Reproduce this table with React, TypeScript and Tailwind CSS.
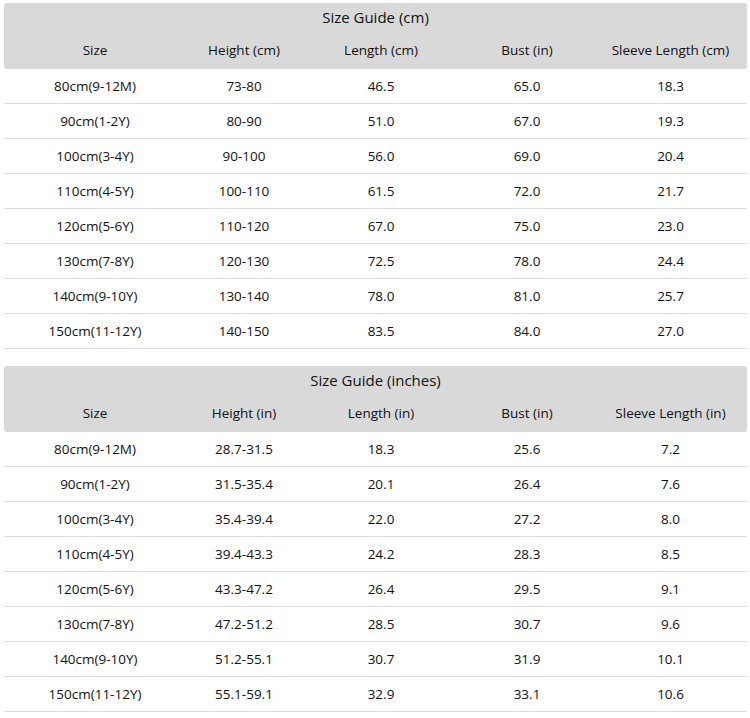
import React from "react";

type Table = {
  title: string;
  headers: string[];
  rows: string[][];
};

const sizes = [
  "80cm(9-12M)",
  "90cm(1-2Y)",
  "100cm(3-4Y)",
  "110cm(4-5Y)",
  "120cm(5-6Y)",
  "130cm(7-8Y)",
  "140cm(9-10Y)",
  "150cm(11-12Y)",
];

const cmTable: Table = {
  title: "Size Guide (cm)",
  headers: ["Size", "Height (cm)", "Length (cm)", "Bust (in)", "Sleeve Length (cm)"],
  rows: [
    ["73-80", "46.5", "65.0", "18.3"],
    ["80-90", "51.0", "67.0", "19.3"],
    ["90-100", "56.0", "69.0", "20.4"],
    ["100-110", "61.5", "72.0", "21.7"],
    ["110-120", "67.0", "75.0", "23.0"],
    ["120-130", "72.5", "78.0", "24.4"],
    ["130-140", "78.0", "81.0", "25.7"],
    ["140-150", "83.5", "84.0", "27.0"],
  ].map((r, i) => [sizes[i], ...r]),
};

const inTable: Table = {
  title: "Size Guide (inches)",
  headers: ["Size", "Height (in)", "Length (in)", "Bust (in)", "Sleeve Length (in)"],
  rows: [
    ["28.7-31.5", "18.3", "25.6", "7.2"],
    ["31.5-35.4", "20.1", "26.4", "7.6"],
    ["35.4-39.4", "22.0", "27.2", "8.0"],
    ["39.4-43.3", "24.2", "28.3", "8.5"],
    ["43.3-47.2", "26.4", "29.5", "9.1"],
    ["47.2-51.2", "28.5", "30.7", "9.6"],
    ["51.2-55.1", "30.7", "31.9", "10.1"],
    ["55.1-59.1", "32.9", "33.1", "10.6"],
  ].map((r, i) => [sizes[i], ...r]),
};

const cols = "grid grid-cols-[182px_116px_158px_134px_153px]";

const SizeTable: React.FC<{ table: Table }> = ({ table }) => {
  return (
    <div className="w-[743px]">
      <div className="bg-[#d9d9d9] rounded-[3px]">
        <div className="h-[28px] flex items-center justify-center text-[15px]">
          {table.title}
        </div>
        <div className={`${cols} h-[38px] items-center text-[13.5px]`}>
          {table.headers.map((h) => (
            <div key={h} className="text-center">
              {h}
            </div>
          ))}
        </div>
      </div>
      {table.rows.map((row, i) => (
        <div
          key={i}
          className={`${cols} h-[35px] items-center text-[13.5px] border-b border-[#dedede]`}
        >
          {row.map((cell, j) => (
            <div key={j} className="text-center">
              {cell}
            </div>
          ))}
        </div>
      ))}
    </div>
  );
};

export default function App() {
  return (
    <div
      className="w-[750px] h-[718px] bg-white text-[#111] pl-[4px] pt-[3px] flex flex-col gap-[17px]"
      style={{ fontFamily: '"Open Sans", "Noto Sans", sans-serif' }}
    >
      <SizeTable table={cmTable} />
      <SizeTable table={inTable} />
    </div>
  );
}
